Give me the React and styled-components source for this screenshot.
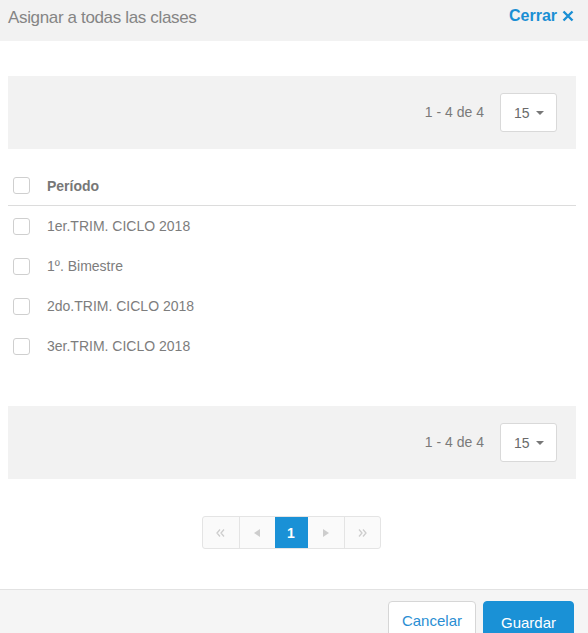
import React from "react";
import styled, { createGlobalStyle } from "styled-components";

const GlobalStyle = createGlobalStyle`
    html, body {
        margin: 0;
        padding: 0;
        background: #ffffff;
        font-family: "Liberation Sans", Arial, sans-serif;
    }
    * { box-sizing: border-box; }
`;

const Modal = styled.div`
    width: 588px;
    height: 633px;
    overflow: hidden;
    display: flex;
    flex-direction: column;
    background: #fff;
`;

const Header = styled.div`
    height: 41px;
    flex-shrink: 0;
    display: flex;
    align-items: center;
    justify-content: space-between;
    padding: 0 14px 0 8px;
    background: #f2f2f2;
`;

const Title = styled.div`
    font-size: 17px;
    letter-spacing: -0.35px;
    color: #858585;
    margin-top: -6px;
`;

const CloseLink = styled.a`
    display: flex;
    align-items: center;
    gap: 5px;
    font-size: 16px;
    font-weight: bold;
    color: #1a8fd4;
    cursor: pointer;
    margin-top: -10px;
`;

const Body = styled.div`
    padding: 35px 12px 0 8px;
`;

const Toolbar = styled.div`
    height: 73px;
    display: flex;
    align-items: center;
    justify-content: flex-end;
    gap: 16px;
    padding-right: 19px;
    background: #f2f2f2;
`;

const Count = styled.span`
    font-size: 14px;
    color: #7a7a7a;
    margin-top: -2px;
`;

const PageSize = styled.div`
    width: 57px;
    height: 39px;
    display: flex;
    align-items: center;
    justify-content: space-between;
    padding: 0 12px 0 13px;
    background: #fff;
    border: 1px solid #d9d9d9;
    border-radius: 3px;
    font-size: 14px;
    color: #6a6a6a;
`;

const Table = styled.div`
    margin: 17px 0 40px;
`;

const Row = styled.div`
    height: 40px;
    display: flex;
    align-items: center;
    gap: 17px;
    padding-left: 5px;
    border-bottom: ${(p) => (p.$head ? "1px solid #dcdcdc" : "none")};
    font-size: 14px;
    font-weight: ${(p) => (p.$head ? "bold" : "normal")};
    color: ${(p) => (p.$head ? "#777" : "#7d7d7d")};
`;

const Check = styled.span`
    width: 17px;
    height: 17px;
    flex-shrink: 0;
    border: 1px solid #cfcfcf;
    border-radius: 3px;
    background: #fff;
`;

const PagerWrap = styled.div`
    display: flex;
    justify-content: center;
    padding: 37px 2px 0 0;
`;

const Pager = styled.div`
    display: flex;
    height: 33px;
    border: 1px solid #e4e4e4;
    border-radius: 3px;
    overflow: hidden;
    background: #fafafa;
`;

const PageBtn = styled.span`
    width: ${(p) => (p.$active ? "33px" : "36px")};
    display: flex;
    align-items: center;
    justify-content: center;
    border-left: ${(p) => (p.$first || p.$active ? "none" : "1px solid #e4e4e4")};
    background: ${(p) => (p.$active ? "#1a91d6" : "transparent")};
    color: ${(p) => (p.$active ? "#fff" : "#c9c9c9")};
    font-size: 14px;
    font-weight: ${(p) => (p.$active ? "bold" : "normal")};
`;

const Footer = styled.div`
    margin-top: auto;
    height: 44px;
    flex-shrink: 0;
    display: flex;
    justify-content: flex-end;
    align-items: flex-start;
    gap: 7px;
    padding: 11px 14px 0 0;
    background: #f5f5f5;
    border-top: 1px solid #e2e2e2;
`;

const Button = styled.button`
    height: 42px;
    padding: 0 ${(p) => (p.$primary ? "17px" : "13px")};
    border: 1px solid ${(p) => (p.$primary ? "#1a91d6" : "#d6d6d6")};
    border-radius: 4px;
    background: ${(p) => (p.$primary ? "#1a91d6" : "#fff")};
    color: ${(p) => (p.$primary ? "#fff" : "#2a8ed3")};
    font-family: "Liberation Sans", Arial, sans-serif;
    font-size: 15px;
    padding-bottom: ${(p) => (p.$primary ? "0" : "3px")};
`;

const Caret = () => (
    <svg width="8" height="4" viewBox="0 0 8 4">
        <path d="M0 0h8L4 4z" fill="#777" />
    </svg>
);

const Cross = () => (
    <svg width="12" height="12" viewBox="0 0 12 12">
        <path d="M1.5 1.5l9 9M10.5 1.5l-9 9" stroke="#1a8fd4" strokeWidth="2.4" />
    </svg>
);

const Tri = ({ dir }) => (
    <svg width="6" height="8" viewBox="0 0 6 8">
        <path d={dir === "left" ? "M6 0v8L0 4z" : "M0 0v8l6-4z"} fill="#cdcdcd" />
    </svg>
);

const Dbl = ({ dir }) => (
    <svg width="9" height="8" viewBox="0 0 9 8">
        <path
            d={dir === "left" ? "M4 0.5L1 4l3 3.5M8 0.5L5 4l3 3.5" : "M1 0.5L4 4l-3 3.5M5 0.5L8 4l-3 3.5"}
            stroke="#cdcdcd"
            strokeWidth="1.3"
            fill="none"
        />
    </svg>
);

const periods = [
    "1er.TRIM. CICLO 2018",
    "1º. Bimestre",
    "2do.TRIM. CICLO 2018",
    "3er.TRIM. CICLO 2018",
];

const Bar = () => (
    <Toolbar>
        <Count>1 - 4 de 4</Count>
        <PageSize>
            15 <Caret />
        </PageSize>
    </Toolbar>
);

const App = () => {
    return (
        <Modal>
            <GlobalStyle />
            <Header>
                <Title>Asignar a todas las clases</Title>
                <CloseLink>
                    Cerrar <Cross />
                </CloseLink>
            </Header>
            <Body>
                <Bar />
                <Table>
                    <Row $head>
                        <Check />
                        Período
                    </Row>
                    {periods.map((p) => (
                        <Row key={p}>
                            <Check />
                            {p}
                        </Row>
                    ))}
                </Table>
                <Bar />
                <PagerWrap>
                    <Pager>
                        <PageBtn $first><Dbl dir="left" /></PageBtn>
                        <PageBtn><Tri dir="left" /></PageBtn>
                        <PageBtn $active>1</PageBtn>
                        <PageBtn $first><Tri dir="right" /></PageBtn>
                        <PageBtn><Dbl dir="right" /></PageBtn>
                    </Pager>
                </PagerWrap>
            </Body>
            <Footer>
                <Button>Cancelar</Button>
                <Button $primary>Guardar</Button>
            </Footer>
        </Modal>
    );
};

export default App;
